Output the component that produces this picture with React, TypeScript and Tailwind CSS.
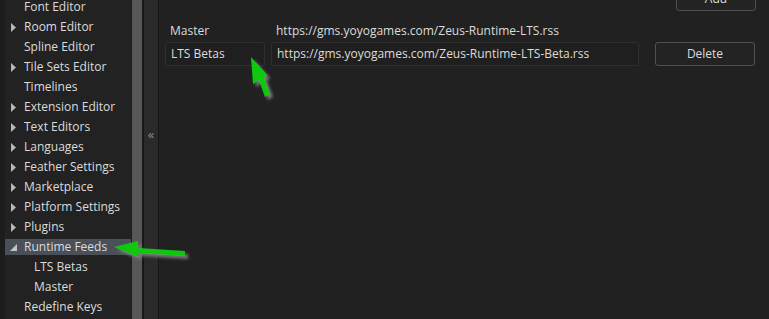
import React from "react";

type Item = { label: string; level: number; arrow?: "right" | "down"; selected?: boolean };

const items: Item[] = [
  { label: "Font Editor", level: 0 },
  { label: "Room Editor", level: 0, arrow: "right" },
  { label: "Spline Editor", level: 0 },
  { label: "Tile Sets Editor", level: 0, arrow: "right" },
  { label: "Timelines", level: 0 },
  { label: "Extension Editor", level: 0, arrow: "right" },
  { label: "Text Editors", level: 0, arrow: "right" },
  { label: "Languages", level: 0, arrow: "right" },
  { label: "Feather Settings", level: 0, arrow: "right" },
  { label: "Marketplace", level: 0, arrow: "right" },
  { label: "Platform Settings", level: 0, arrow: "right" },
  { label: "Plugins", level: 0, arrow: "right" },
  { label: "Runtime Feeds", level: 0, arrow: "down", selected: true },
  { label: "LTS Betas", level: 1 },
  { label: "Master", level: 1 },
  { label: "Redefine Keys", level: 0 },
];

function Arrow({ dir }: { dir?: "right" | "down" }) {
  if (dir === "right")
    return (
      <svg width="6" height="9" viewBox="0 0 6 9" className="absolute left-[6px] top-[4px]">
        <polygon points="0,0 5,4.5 0,9" fill="#b8b8b8" />
      </svg>
    );
  if (dir === "down")
    return (
      <svg width="7" height="7" viewBox="0 0 7 7" className="absolute left-[5px] top-[5px]">
        <polygon points="7,0 7,7 0,7" fill="#c4c4c4" />
      </svg>
    );
  return null;
}

export default function App() {
  return (
    <div
      className="relative flex w-[769px] h-[319px] overflow-hidden bg-[#212121] text-[12px] text-[#dcdcdc]"
      style={{ fontFamily: '"Open Sans", "Noto Sans", sans-serif' }}
    >
      {/* Sidebar */}
      <div className="flex w-[131px] shrink-0 bg-[#222222]">
        <div className="w-[5px] shrink-0 bg-[#1c1c1c]" />
        <div className="flex-1 flex flex-col -mt-[3px]">
          {items.map((it, i) => (
            <div key={i} className="h-[20px] py-[2px] shrink-0">
              <div
                className={
                  "relative h-[16px] flex items-center leading-[16px] whitespace-nowrap " +
                  (it.selected ? "bg-[#4a5058]" : "")
                }
              >
                <Arrow dir={it.arrow} />
                <span className={it.level === 1 ? "pl-[29px]" : "pl-[19px]"}>{it.label}</span>
              </div>
            </div>
          ))}
        </div>
      </div>
      {/* Scrollbar */}
      <div className="w-[12px] shrink-0 flex bg-[#222222]">
        <div className="w-[1px] bg-[#1e1e1e]" />
        <div className="w-[10px] bg-[#575757]" />
        <div className="w-[1px] bg-[#1a1a1a]" />
      </div>
      <div className="w-[1px] shrink-0 bg-[#161616]" />
      {/* Collapse strip */}
      <div className="w-[14px] shrink-0 bg-[#2a2a2a] flex items-center justify-center">
        <span className="text-[#8c8c8c] text-[13px] leading-none -mt-[50px]">«</span>
      </div>
      <div className="w-[1px] shrink-0 bg-[#171717]" />
      {/* Main */}
      <div className="flex-1 flex flex-col pl-[6px]">
        <div className="flex justify-end pr-[13px] -mt-[13px]">
          <div className="w-[80px] h-[24px] rounded-[3px] border border-[#505050] bg-[#232323] flex items-center justify-center">
            Add
          </div>
        </div>
        <div className="flex items-center h-[23px] mt-[8px]">
          <div className="w-[100px] pl-[5px]">Master</div>
          <div className="ml-[6px] pl-[5px]">https://gms.yoyogames.com/Zeus-Runtime-LTS.rss</div>
        </div>
        <div className="flex items-center h-[24px]">
          <div className="w-[100px] h-[24px] pl-[5px] flex items-center rounded-[2px] border border-[#2e2e2e] bg-[#1f1f1f]">
            LTS Betas
          </div>
          <div className="ml-[6px] w-[368px] h-[24px] pl-[5px] flex items-center rounded-[2px] border border-[#2e2e2e] bg-[#1f1f1f]">
            https://gms.yoyogames.com/Zeus-Runtime-LTS-Beta.rss
          </div>
          <div className="ml-[16px] w-[100px] h-[24px] rounded-[3px] border border-[#505050] bg-[#232323] flex items-center justify-center">
            Delete
          </div>
        </div>
      </div>
      {/* Annotation arrows */}
      <svg className="absolute left-0 top-0 pointer-events-none" width="769" height="319">
        <defs>
          <filter id="sh" x="-50%" y="-50%" width="200%" height="200%">
            <feGaussianBlur in="SourceAlpha" stdDeviation="1.5" />
            <feOffset dx="3" dy="3" result="b" />
            <feFlood floodColor="#777777" />
            <feComposite in2="b" operator="in" />
            <feMerge>
              <feMergeNode />
              <feMergeNode in="SourceGraphic" />
            </feMerge>
          </filter>
        </defs>
        <polygon
          filter="url(#sh)"
          fill="#10c810"
          points="251,57 253,84 259,80 265,97 270,94 264,78 267,75"
        />
        <polygon
          filter="url(#sh)"
          fill="#10c810"
          points="114,247 138,241 138,248 185,251 185,256 138,253 138,257"
        />
      </svg>
    </div>
  );
}
